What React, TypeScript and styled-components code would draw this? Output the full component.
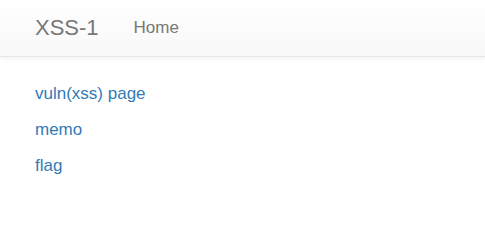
import styled, { createGlobalStyle } from 'styled-components';

const GlobalStyle = createGlobalStyle`
  body {
    margin: 0;
    background: #fff;
    font-family: "Liberation Sans", Arial, sans-serif;
    color: #333;
  }
`;

const Navbar = styled.nav`
  display: flex;
  align-items: center;
  height: 56px;
  padding: 0 35px;
  background-image: linear-gradient(to bottom, #fff 0, #f8f8f8 100%);
  border-bottom: 1px solid #e7e7e7;
  box-shadow: 0 1px 5px rgba(0, 0, 0, 0.075);
`;

const Brand = styled.a`
  font-size: 22px;
  color: #777;
  text-decoration: none;
  margin-right: 35px;
`;

const NavLink = styled.a`
  font-size: 17px;
  color: #777;
  text-decoration: none;
`;

const Content = styled.main`
  display: flex;
  flex-direction: column;
  gap: 17px;
  padding: 27px 35px;
`;

const PageLink = styled.a`
  font-size: 17px;
  line-height: 19px;
  color: #337ab7;
  text-decoration: none;
`;

const links = ['vuln(xss) page', 'memo', 'flag'];

export default function App() {
  return (
    <>
      <GlobalStyle />
      <Navbar>
        <Brand href="#">XSS-1</Brand>
        <NavLink href="#">Home</NavLink>
      </Navbar>
      <Content>
        {links.map((l) => (
          <PageLink key={l} href="#">
            {l}
          </PageLink>
        ))}
      </Content>
    </>
  );
}
